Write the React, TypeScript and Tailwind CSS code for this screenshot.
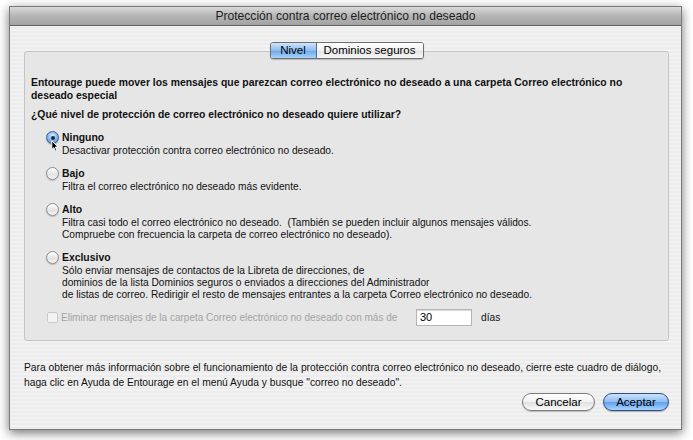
import React from "react";

const font = "font-['Liberation_Sans','Arial',sans-serif]";

function Radio({ checked }: { checked?: boolean }) {
  return checked ? (
    <span className="relative h-[13px] w-[13px] shrink-0 rounded-full border border-[#3b5f8f] bg-[radial-gradient(circle_at_50%_35%,#dcecfb_0%,#8fbdef_45%,#3d86d8_100%)] shadow-[0_1px_1px_rgba(0,0,0,0.25)]">
      <span className="absolute left-[3.5px] top-[3.5px] h-[4px] w-[4px] rounded-full bg-[#1b2a3c]" />
    </span>
  ) : (
    <span className="h-[13px] w-[13px] shrink-0 rounded-full border border-[#8a8a8a] bg-[linear-gradient(#ffffff,#e2e2e2_60%,#f6f6f6)] shadow-[0_1px_1px_rgba(0,0,0,0.2)]" />
  );
}

type Option = { label: string; lines: string[]; checked?: boolean };

const options: Option[] = [
  { label: "Ninguno", checked: true, lines: ["Desactivar protección contra correo electrónico no deseado."] },
  { label: "Bajo", lines: ["Filtra el correo electrónico no deseado más evidente."] },
  {
    label: "Alto",
    lines: [
      "Filtra casi todo el correo electrónico no deseado.\u00a0 (También se pueden incluir algunos mensajes válidos.",
      "Compruebe con frecuencia la carpeta de correo electrónico no deseado).",
    ],
  },
  {
    label: "Exclusivo",
    lines: [
      "Sólo enviar mensajes de contactos de la Libreta de direcciones, de",
      "dominios de la lista Dominios seguros o enviados a direcciones del Administrador",
      "de listas de correo. Redirigir el resto de mensajes entrantes a la carpeta Correo electrónico no deseado.",
    ],
  },
];

export default function App() {
  return (
    <div className={`${font} relative h-[440px] w-[693px] overflow-hidden bg-white`}>
      <div className="ml-[9px] mt-[6px] flex h-[424px] w-[673px] flex-col border border-[#7a7a7a] shadow-[0_3px_10px_rgba(0,0,0,0.55)]">
        {/* title bar */}
        <div className="flex h-[19px] items-center justify-center border-b border-[#5f5f5f] bg-[linear-gradient(#d9d9d9,#b5b5b5_50%,#a3a3a3)] text-[12.1px] text-[#1e1e1e]">
          Protección contra correo electrónico no deseado
        </div>

        <div className="flex flex-1 flex-col bg-[repeating-linear-gradient(0deg,#ececec_0px,#ececec_2px,#f2f2f2_2px,#f2f2f2_4px)] pl-[14px] pr-[12px] pt-[16px]">
          {/* tabs */}
          <div className="relative z-10 flex justify-center">
            <div className="flex h-[17px] overflow-hidden rounded-[3px] border border-[#6e6e6e] text-[11.5px] leading-[15px] text-black shadow-[0_1px_1px_rgba(0,0,0,0.2)]">
              <div className="w-[46px] border-r border-[#4a6f9e] bg-[linear-gradient(#cfe4fa,#8dbdf0_50%,#6aa8ea_51%,#a9d3fb)] text-center">
                Nivel
              </div>
              <div className="w-[106px] bg-[linear-gradient(#ffffff,#f0f0f0_50%,#e3e3e3_51%,#f7f7f7)] text-center">
                Dominios seguros
              </div>
            </div>
          </div>

          {/* group box */}
          <div className="-mt-[8px] rounded-[3px] border border-[#c4c4c4] bg-[#e6e6e6] pb-[14px] pl-[6px] pr-[6px] pt-[24px] text-[#111]">
            <p className="whitespace-nowrap text-[10.4px] font-bold leading-[13px]">
              Entourage puede mover los mensajes que parezcan correo electrónico no deseado a una carpeta Correo electrónico no
              <br />
              deseado especial
            </p>
            <p className="mt-[6px] whitespace-nowrap text-[10.4px] font-bold leading-[13px]">
              ¿Qué nivel de protección de correo electrónico no deseado quiere utilizar?
            </p>

            <div className="relative ml-[15px]">
              {options.map((o) => (
                <div key={o.label} className="mt-[10px]">
                  <div className="flex items-center gap-[3px]">
                    <Radio checked={o.checked} />
                    <span className="text-[10.4px] font-bold leading-[13px]">{o.label}</span>
                  </div>
                  <div className="ml-[16px] mt-[1px] whitespace-nowrap text-[10.2px] leading-[12px]">
                    {o.lines.map((l, i) => (
                      <div key={i}>{l}</div>
                    ))}
                  </div>
                </div>
              ))}

              {/* cursor */}
              <svg className="absolute left-[5px] top-[9px]" width="8" height="12" viewBox="0 0 10 15">
                <path d="M1 1 L1 12 L3.6 9.6 L5.6 14 L7.4 13.2 L5.4 8.9 L8.8 8.9 Z" fill="#000" stroke="#fff" strokeWidth="1.2" strokeLinejoin="round" />
              </svg>
            </div>

            <div className="ml-[16px] mt-[8px] flex items-center">
              <span className="h-[11px] w-[11px] rounded-[2px] border border-[#c9c9c9] bg-[#f3f3f3]" />
              <span className="ml-[3px] w-[355px] whitespace-nowrap text-[10px] text-[#a3a3a3]">
                Eliminar mensajes de la carpeta Correo electrónico no deseado con más de
              </span>
              <div className="h-[17px] w-[56px] border border-[#b5b5b5] bg-white pl-[3px] text-[11px] leading-[15px] text-black shadow-[inset_0_1px_1px_rgba(0,0,0,0.15)]">
                30
              </div>
              <span className="ml-[9px] text-[10.2px]">días</span>
            </div>
          </div>

          {/* footer */}
          <p className="mt-[19px] whitespace-nowrap text-[10.25px] leading-[15px] text-[#111]">
            Para obtener más información sobre el funcionamiento de la protección contra correo electrónico no deseado, cierre este cuadro de diálogo,
            <br />
            haga clic en Ayuda de Entourage en el menú Ayuda y busque "correo no deseado".
          </p>

          <div className="mt-[3px] flex justify-end gap-[8px]">
            <button className="h-[18px] w-[73px] rounded-full border border-[#7c7c7c] bg-[linear-gradient(#ffffff,#f1f1f1_50%,#e0e0e0_51%,#fafafa)] text-[11.5px] leading-[16px] text-black shadow-[0_1px_1px_rgba(0,0,0,0.2)]">
              Cancelar
            </button>
            <button className="h-[18px] w-[66px] rounded-full border border-[#2e4f86] bg-[linear-gradient(#cde3fb,#8cbcf2_50%,#5ea0ea_51%,#a8d4fd)] text-[11.5px] leading-[16px] text-black shadow-[0_1px_1px_rgba(0,0,0,0.25)]">
              Aceptar
            </button>
          </div>
        </div>
      </div>
    </div>
  );
}
